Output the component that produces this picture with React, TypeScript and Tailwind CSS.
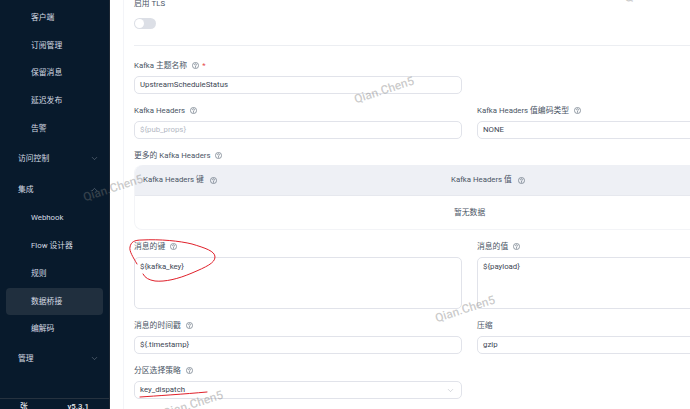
import { ChevronDown, ChevronUp } from "lucide-react";

const font = { fontFamily: '"Roboto", "Noto Sans CJK SC", sans-serif' };

function Help({ className = "" }: { className?: string }) {
  return (
    <svg width="7" height="7" viewBox="0 0 16 16" fill="none" stroke="#5f6b7a" strokeWidth="1.5" className={className}>
      <circle cx="8" cy="8" r="7" />
      <path d="M5.8 6.3a2.2 2.2 0 1 1 3.3 1.9c-.7.4-1.1.8-1.1 1.6" strokeLinecap="round" />
      <path d="M8 11.4v.9" strokeLinecap="round" />
    </svg>
  );
}

function Label({ text, help = true, required = false }: { text: string; help?: boolean; required?: boolean }) {
  return (
    <div className="flex h-[12px] items-center pt-[1px] text-[7.8px] leading-[12px] text-[#4a5565]">
      <span>{text}</span>
      {help && <Help className="ml-[5px]" />}
      {required && <span className="ml-[3px] text-[#e5484d]">*</span>}
    </div>
  );
}

function Field({
  label,
  value,
  help = true,
  required = false,
  placeholder = false,
  tall = false,
  select = false,
}: {
  label: string;
  value: string;
  help?: boolean;
  required?: boolean;
  placeholder?: boolean;
  tall?: boolean;
  select?: boolean;
}) {
  return (
    <div className="flex flex-col gap-[5px]">
      <Label text={label} help={help} required={required} />
      <div
        className={`flex justify-between rounded-[5px] border border-[#e1e3ea] bg-white pl-[5px] pr-[6px] text-[7.8px] ${
          tall ? "h-[52px] items-start pt-[3px]" : "h-[18px] items-center"
        } ${placeholder ? "text-[#b4b9c4]" : "text-[#3d4654]"}`}
      >
        <span>{value}</span>
        {select && <ChevronDown size={9} strokeWidth={1.2} className="text-[#a8adb8]" />}
      </div>
    </div>
  );
}

function NavItem({ text, active = false }: { text: string; active?: boolean }) {
  return (
    <div
      className={`mx-[6px] flex h-[27.7px] shrink-0 items-center rounded-[4px] pl-[25px] text-[7.8px] text-[#d5dbe3] ${
        active ? "bg-[#202f3e]" : ""
      }`}
    >
      {text}
    </div>
  );
}

function NavGroup({ text, open = false, className = "" }: { text: string; open?: boolean; className?: string }) {
  return (
    <div className={`flex h-[30px] shrink-0 items-center justify-between pl-[18px] pr-[10px] text-[7.8px] text-[#d5dbe3] ${className}`}>
      <span>{text}</span>
      {open ? (
        <ChevronUp size={9} strokeWidth={1.2} className="text-[#8c98a6]" />
      ) : (
        <ChevronDown size={9} strokeWidth={1.2} className="text-[#8c98a6]" />
      )}
    </div>
  );
}

function Watermark({ className }: { className: string }) {
  return (
    <span className={`pointer-events-none absolute z-10 whitespace-nowrap text-[12px] font-medium text-[#7a7a7a]/40 ${className}`}>
      Qian.Chen5
    </span>
  );
}

export default function App() {
  return (
    <div style={font} className="relative flex h-[409px] w-[690px] overflow-hidden bg-white">
      <aside className="flex h-full w-[110px] shrink-0 flex-col border-r border-[#1d2733] bg-[#081a2c] pt-[4px]">
        <NavItem text="客户端" />
        <NavItem text="订阅管理" />
        <NavItem text="保留消息" />
        <NavItem text="延迟发布" />
        <NavItem text="告警" />
        <NavGroup text="访问控制" className="mt-[1px]" />
        <NavGroup text="集成" open className="mt-[1px]" />
        <NavItem text="Webhook" />
        <NavItem text="Flow 设计器" />
        <NavItem text="规则" />
        <NavItem text="数据桥接" active />
        <NavItem text="编解码" />
        <NavGroup text="管理" className="mt-[1px]" />
        <div className="mt-[24px] flex shrink-0 items-start justify-between border-t border-[#26323f] pl-[20px] pr-[20px] pt-[2px] text-[7.8px] font-medium leading-[12px] text-[#e6eaef]">
          <span>张</span>
          <span>v5.3.1</span>
        </div>
      </aside>

      <main className="ml-[13px] min-w-0 flex-1 overflow-hidden border-l border-[#f3f4f8] pl-[10px]">
        <div className="-mt-[4px] w-[671px]">
          <div className="flex h-[14px] items-center pt-[1px] text-[7.8px] text-[#4a5565]">启用 TLS</div>
          <div className="mt-[8px] flex h-[11px] w-[22px] items-center rounded-full bg-[#dcdfe6] pl-[1px]">
            <div className="h-[9px] w-[9px] rounded-full bg-white" />
          </div>
          <div className="mb-[13px] mt-[16px] h-px bg-[#eceef2]" />

          <div className="grid grid-cols-[328px_328px] gap-x-[15px] gap-y-[10px]">
            <Field label="Kafka 主题名称" value="UpstreamScheduleStatus" required />
            <div />
            <Field label="Kafka Headers" value="${pub_props}" placeholder />
            <Field label="Kafka Headers 值编码类型" value="NONE" />

            <div className="col-span-2 flex flex-col gap-[4px]">
              <Label text="更多的 Kafka Headers" />
              <div className="rounded-[8px] border-b border-l border-[#f3f4f7]">
                <div className="grid h-[31px] grid-cols-[316px_1fr] items-center rounded-t-[8px] border-b border-[#e6e8ee] bg-[#eef0f5] text-[7.8px] text-[#4a5565]">
                  <div className="flex items-center pl-[8px]">
                    Kafka Headers 键
                    <Help className="ml-[6px]" />
                  </div>
                  <div className="flex items-center">
                    Kafka Headers 值
                    <Help className="ml-[6px]" />
                  </div>
                </div>
                <div className="flex h-[33px] items-center pl-[319px] text-[7.8px] text-[#4a5565]">暂无数据</div>
              </div>
            </div>

            <Field label="消息的键" value="${kafka_key}" tall />
            <Field label="消息的值" value="${payload}" tall />
            <Field label="消息的时间戳" value="${.timestamp}" />
            <Field label="压缩" value="gzip" help={false} />
            <Field label="分区选择策略" value="key_dispatch" select />
          </div>
        </div>
      </main>

      <Watermark className="left-[353px] top-[81px] -rotate-[18deg]" />
      <Watermark className="left-[82px] top-[179px] -rotate-[18deg]" />
      <Watermark className="left-[434px] top-[300px] -rotate-[18deg]" />
      <Watermark className="left-[162px] top-[395px] -rotate-[18deg]" />
      <Watermark className="left-[623px] top-[-20px] -rotate-[18deg]" />

      <svg className="pointer-events-none absolute left-0 top-0 z-20" width="690" height="409" fill="none" stroke="#e0202a" strokeWidth="1" strokeLinecap="round">
        <path d="M137 264C133 257 129 251 130 247C131 242 134 240 142 240C160 239 180 241 192 244C205 248 215 251 215 257C215 263 206 267 192 273C178 279 165 282 155 281C149 280 145 278 143 274" />
        <path d="M140 397C155 396 185 394 207 392" />
      </svg>
    </div>
  );
}
